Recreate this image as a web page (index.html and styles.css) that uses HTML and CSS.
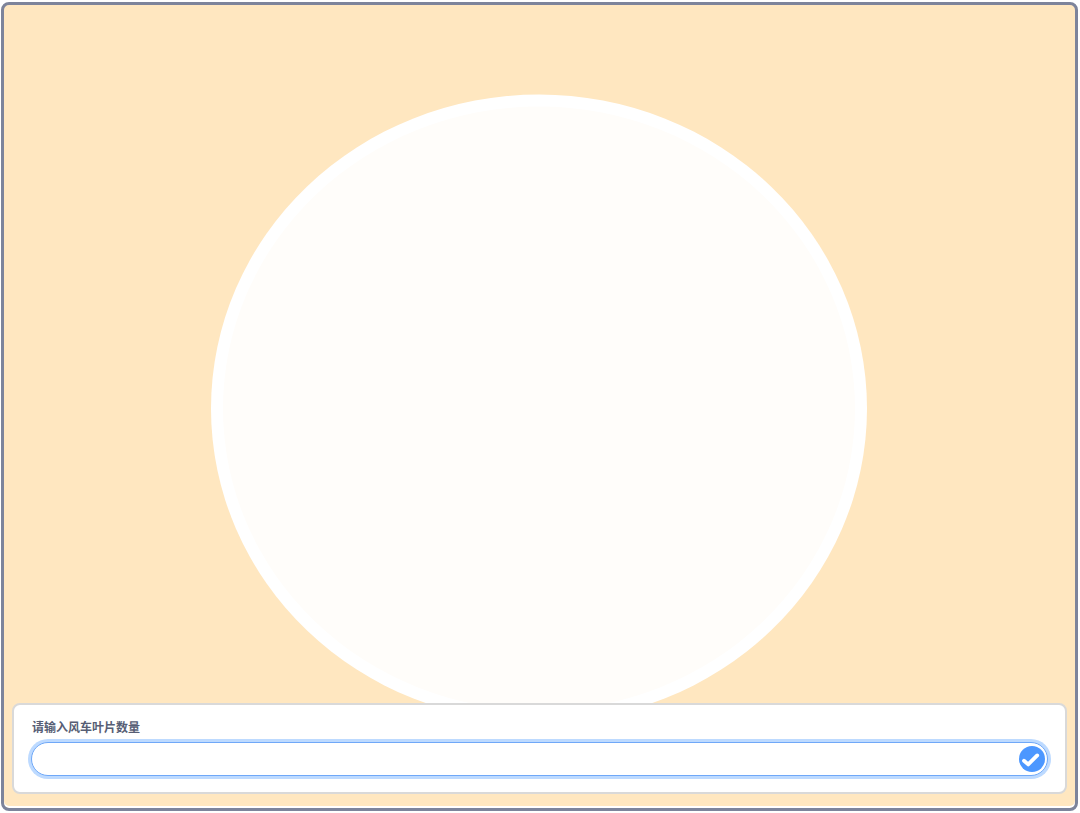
FILE: index.html
```html
<!DOCTYPE html>
<html lang="zh-CN">
<head>
<meta charset="utf-8">
<meta name="viewport" content="width=device-width, initial-scale=1">
<title>风车</title>
<link rel="stylesheet" href="styles.css">
</head>
<body>
<main class="stage">
  <svg class="backdrop" viewBox="0 0 1071 802" preserveAspectRatio="xMidYMid slice" aria-hidden="true">
    <ellipse cx="535" cy="404" rx="328" ry="314" fill="#ffffff"/>
    <ellipse cx="535" cy="404" rx="316" ry="302" fill="#fffdfa"/>
  </svg>
  <form class="question">
    <label class="question-label" for="answer">请输入风车叶片数量</label>
    <div class="answer">
      <input class="answer-input" id="answer" type="text" autocomplete="off">
      <button class="answer-submit" type="button" aria-label="确定">
        <svg class="check" viewBox="0 0 26 26" aria-hidden="true">
          <path d="M5 14.8 L9.2 18.4 L18.2 9.4" fill="none" stroke="#ffffff" stroke-width="3.8" stroke-linecap="round" stroke-linejoin="round"/>
        </svg>
      </button>
    </div>
  </form>
</main>
</body>
</html>
```
FILE: styles.css
```css
* {
  box-sizing: border-box;
}

body {
  margin: 0;
  background: #ffffff;
  font-family: "Liberation Sans", "Noto Sans CJK SC", sans-serif;
}

.stage {
  position: relative;
  display: flex;
  flex-direction: column;
  justify-content: flex-end;
  min-height: calc(100vh - 4px);
  margin: 2px 2px 2px 1px;
  padding: 8px;
  padding-bottom: 14px;
  border: 3px solid #7d849b;
  border-radius: 8px;
  background: #ffe7c0;
  box-shadow: inset 0 -2px 0 #ffffff;
  overflow: hidden;
}

.backdrop {
  position: absolute;
  inset: 0;
  width: 100%;
  height: calc(100% - 2px);
}

.question {
  position: relative;
  display: flex;
  flex-direction: column;
  gap: 5px;
  padding: 14px 16px 16px;
  border: 2px solid #d9d9d9;
  border-radius: 8px;
  background: #ffffff;
}

.question-label {
  padding-left: 2px;
  color: #575e75;
  font-size: 12px;
  font-weight: 700;
  line-height: 18px;
}

.answer {
  display: flex;
  align-items: center;
  height: 34px;
  margin: 0 1px;
  padding-right: 2px;
  border: 1px solid #6fa8f8;
  border-radius: 17px;
  background: #ffffff;
  box-shadow: 0 0 0 3px #bddaff;
}

.answer-input {
  flex: 1;
  min-width: 0;
  height: 100%;
  padding: 0 16px;
  border: 0;
  border-radius: 17px;
  outline: 0;
  background: transparent;
  color: #575e75;
  font: inherit;
  font-size: 14px;
}

.answer-submit {
  width: 26px;
  height: 26px;
  padding: 0;
  border: 0;
  border-radius: 50%;
  background: #4c97ff;
  cursor: pointer;
}

.check {
  display: block;
  width: 26px;
  height: 26px;
}
```
